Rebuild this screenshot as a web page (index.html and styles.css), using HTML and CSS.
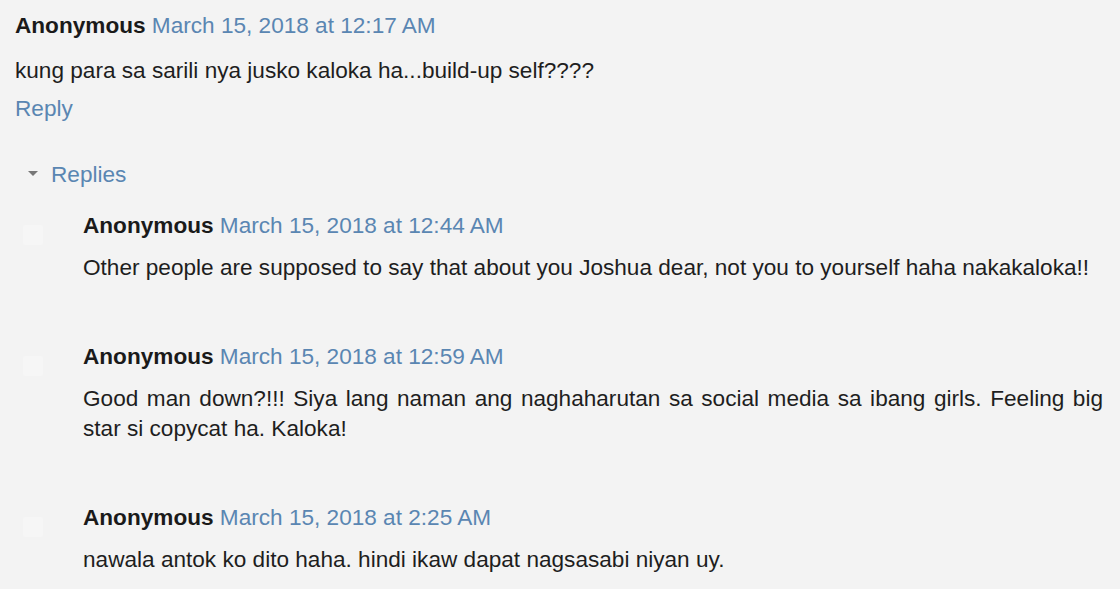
FILE: index.html
```html
<!DOCTYPE html>
<html>
<head>
<meta charset="utf-8">
<link rel="stylesheet" href="styles.css">
</head>
<body>
<div class="thread">
  <div class="comment top">
    <div class="head"><span class="author">Anonymous</span> <a class="date">March 15, 2018 at 12:17 AM</a></div>
    <div class="body">kung para sa sarili nya jusko kaloka ha...build-up self????</div>
    <a class="reply-link">Reply</a>
  </div>
  <div class="replies-toggle"><span class="tri"></span><a>Replies</a></div>
  <div class="replies">
    <div class="comment sub">
      <span class="avatar"></span>
      <div class="head"><span class="author">Anonymous</span> <a class="date">March 15, 2018 at 12:44 AM</a></div>
      <div class="body">Other people are supposed to say that about you Joshua dear, not you to yourself haha nakakaloka!!</div>
    </div>
    <div class="comment sub">
      <span class="avatar"></span>
      <div class="head"><span class="author">Anonymous</span> <a class="date">March 15, 2018 at 12:59 AM</a></div>
      <div class="body">Good man down?!!! Siya lang naman ang naghaharutan sa social media sa ibang girls. Feeling big star si copycat ha. Kaloka!</div>
    </div>
    <div class="comment sub">
      <span class="avatar"></span>
      <div class="head"><span class="author">Anonymous</span> <a class="date">March 15, 2018 at 2:25 AM</a></div>
      <div class="body">nawala antok ko dito haha. hindi ikaw dapat nagsasabi niyan uy.</div>
    </div>
  </div>
</div>
</body>
</html>
```
FILE: styles.css
```css
html, body {
  margin: 0;
  padding: 0;
  background: #f3f3f3;
}
body {
  font-family: "Liberation Sans", Arial, sans-serif;
  font-size: 22.6px;
  color: #1e1e1e;
  width: 1120px;
  height: 589px;
  overflow: hidden;
}
.thread {
  padding: 11px 17px 0 15px;
}
.head, .body, .reply-link, .replies-toggle {
  line-height: 30px;
}
.author {
  font-weight: bold;
  color: #1a1a1a;
}
.date, .reply-link, .replies-toggle a {
  color: #5a86b2;
  text-decoration: none;
}
.top .body {
  margin-top: 15px;
}
.reply-link {
  display: block;
  margin-top: 8px;
}
.replies-toggle {
  display: flex;
  align-items: center;
  gap: 13px;
  margin-top: 36px;
  padding-left: 13px;
}
.tri {
  width: 0;
  height: 0;
  border-left: 5px solid transparent;
  border-right: 5px solid transparent;
  border-top: 5px solid #777;
  margin-top: -4px;
}
.replies {
  padding-left: 68px;
}
.sub {
  position: relative;
  margin-top: 21px;
}
.sub + .sub {
  margin-top: 59px;
}
.sub .body {
  margin-top: 12px;
  text-align: justify;
}
.avatar {
  position: absolute;
  left: -60px;
  top: 14px;
  width: 20px;
  height: 20px;
  background: #f6f6f6;
  border-radius: 2px;
}
```
